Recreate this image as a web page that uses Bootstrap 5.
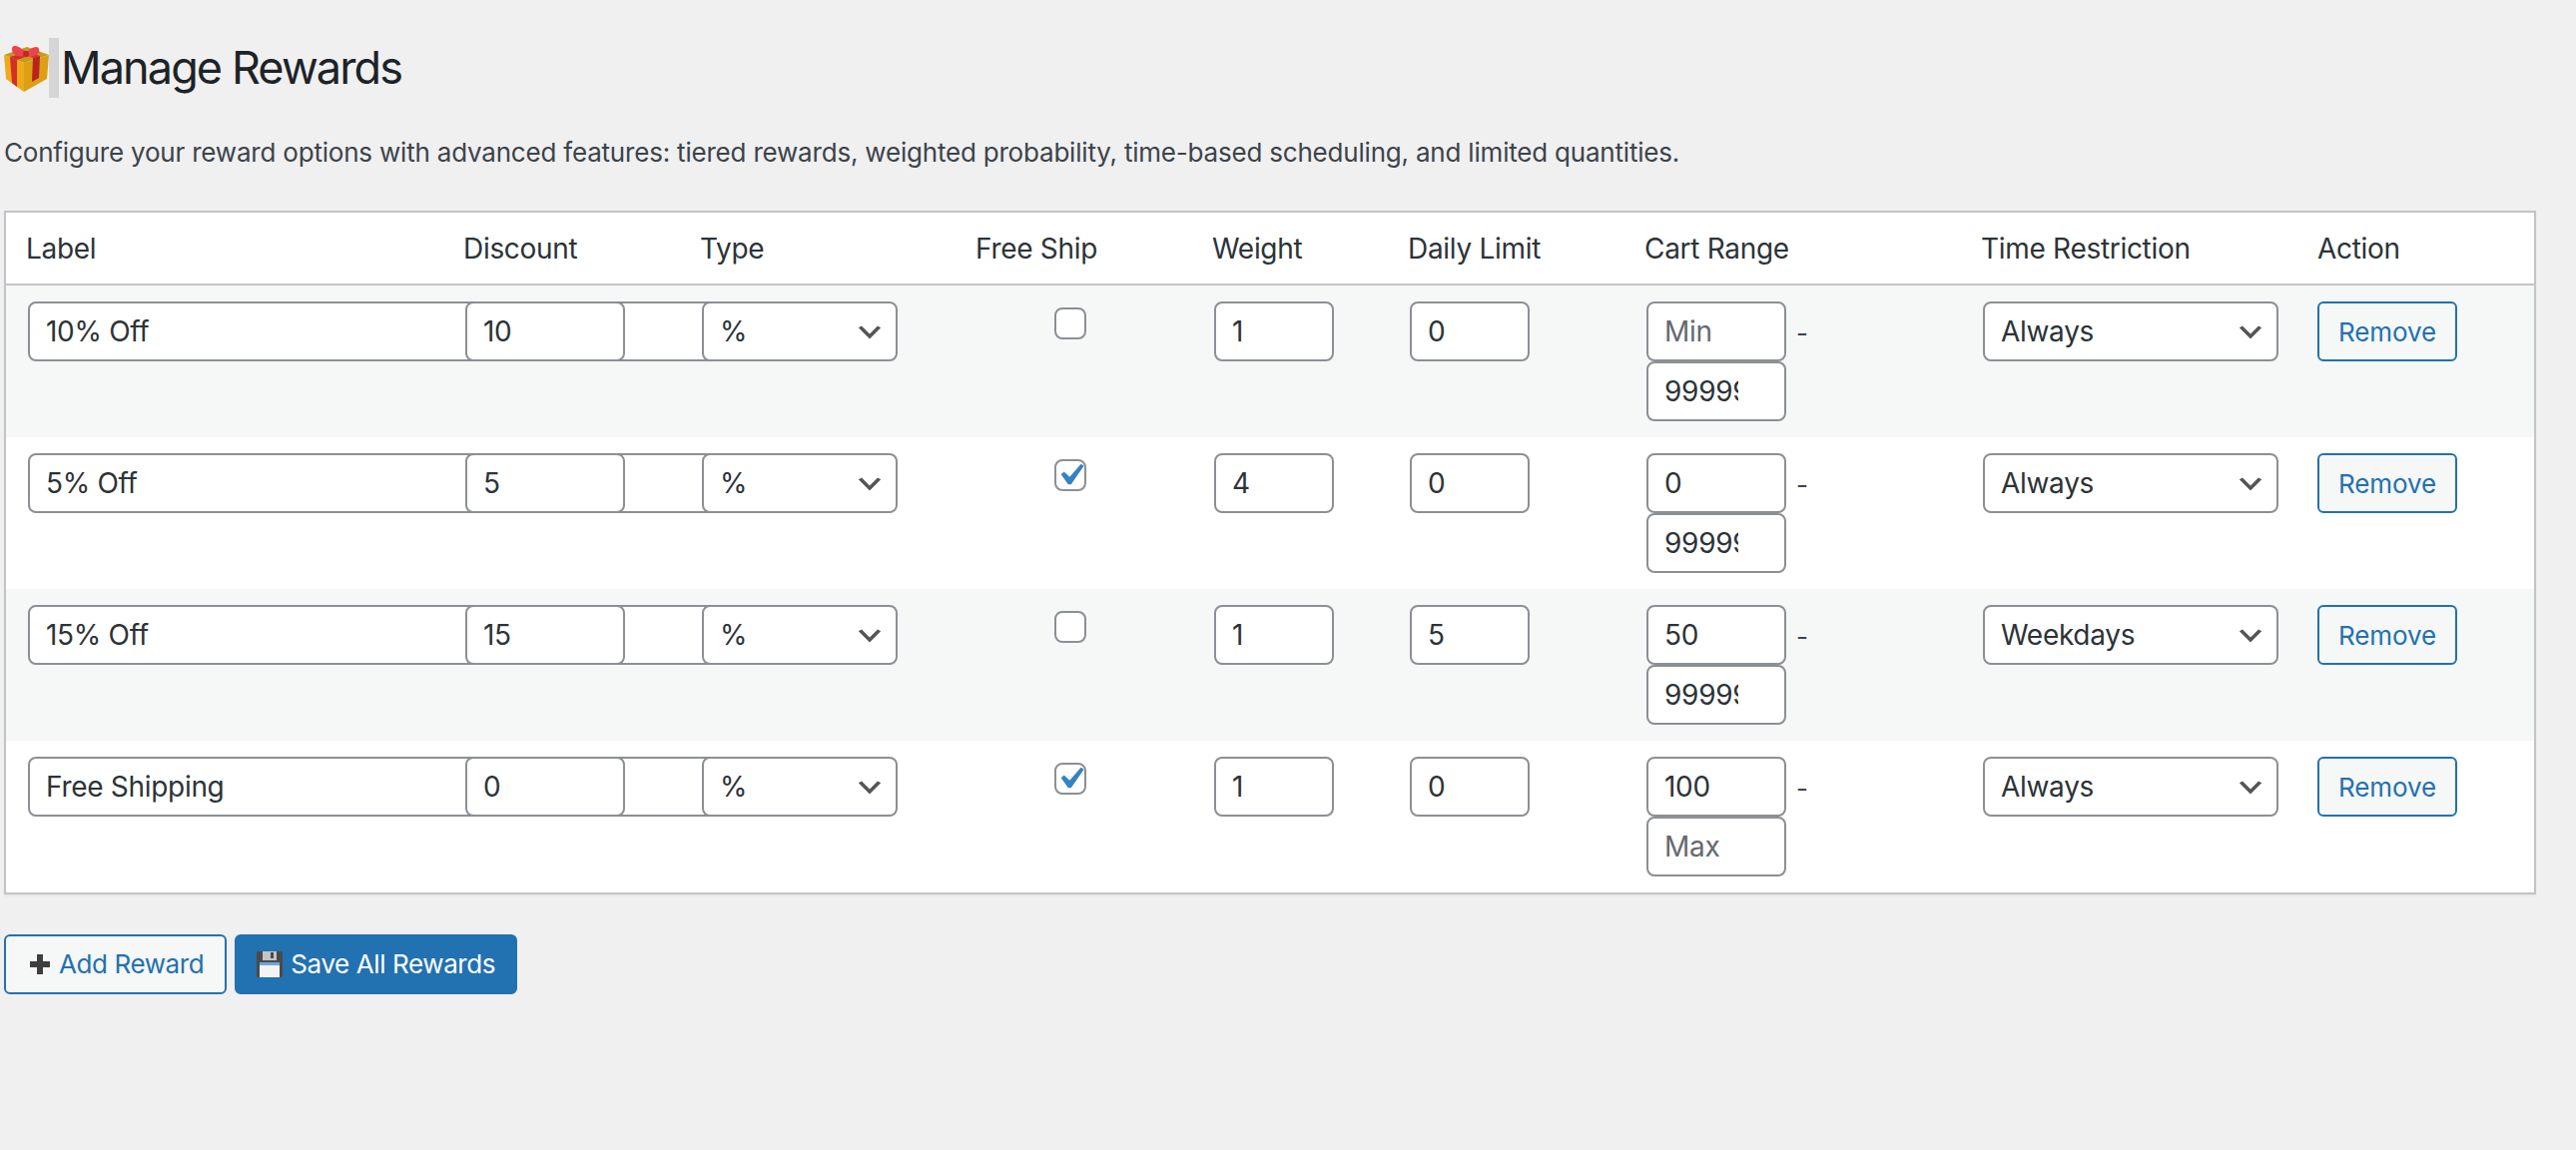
<!DOCTYPE html>
<html lang="en">
<head>
  <meta charset="UTF-8">
  <meta name="viewport" content="width=device-width, initial-scale=1.0">
  <title>Manage Rewards</title>
  <link href="https://cdn.jsdelivr.net/npm/bootstrap@5.3.0/dist/css/bootstrap.min.css" rel="stylesheet">
  <style>
    body {
      background: #f0f0f1;
      font-family: Inter, "Liberation Sans", sans-serif;
      font-size: 26px;
      color: #3c434a;
    }
    .page-wrap { padding: 38px 40px 0 4px; }
    .page-title {
      font-size: 45px;
      font-weight: 400;
      line-height: 60px;
      color: #1d2327;
      margin: 0 0 37px;
      letter-spacing: -1.9px;
    }
    .title-gift { width: 45px; height: 47px; margin-right: 0; }
    .emoji-gap { width: 10px; height: 60px; background: #d5d5d5; margin-right: 2px; }
    .page-desc { line-height: 36px; margin: 0 0 40px; letter-spacing: -0.2px; }

    .table.reward-table {
      --bs-table-bg: #fff;
      --bs-table-striped-bg: #f6f7f7;
      --bs-table-color: #2c3338;
      --bs-table-striped-color: #2c3338;
      table-layout: fixed;
      border-collapse: separate;
      border-spacing: 0;
      border: 2px solid #c3c4c7;
      box-shadow: 0 2px 2px rgba(0, 0, 0, .04);
      margin-bottom: 40px;
    }
    .reward-table > thead > tr > th {
      font-size: 28px;
      font-weight: 400;
      line-height: 39px;
      padding: 17px 20px 15px;
      color: #2c3338;
      border-bottom: 2px solid #c3c4c7;
      letter-spacing: -0.3px;
    }
    .reward-table > tbody > tr > td {
      padding: 16px 20px;
      border-bottom: 0;
      line-height: 36px;
    }
    .col-label { width: 438px; }
    .col-discount, .col-ship, .col-limit { width: 237px; }
    .col-type { width: 276px; }
    .col-weight { width: 196px; }
    .col-range, .col-time { width: 337px; }

    .reward-table .form-control,
    .reward-table .form-select {
      display: inline-block;
      vertical-align: top;
      height: 60px;
      min-height: 60px;
      margin: 0 2px;
      font-size: 28px;
      line-height: 40px;
      color: #2c3338;
      background-color: #fff;
      border: 2px solid #8c8f94;
      border-radius: 8px;
      letter-spacing: -0.3px;
    }
    .reward-table .form-control { padding: 0 16px; }
    .reward-table .form-control::placeholder { color: #646970; opacity: 1; }
    .reward-table .form-select {
      padding: 0 48px 0 16px;
      background-image: url("data:image/svg+xml,%3Csvg xmlns='http://www.w3.org/2000/svg' viewBox='0 0 20 20'%3E%3Cpath d='M5 6l5 5 5-5 2 1-7 7-7-7 2-1z' fill='%23555'/%3E%3C/svg%3E");
      background-position: right 10px top 55%;
      background-size: 32px 32px;
    }
    .field-label { width: 720px; }
    .field-discount { width: 160px; }
    .field-type { width: 196px; }
    .field-small { width: 120px; }
    .field-time { width: 296px; }
    .reward-table .field-range { width: 140px; padding-right: 46px; }
    .range-dash { margin: 4px 0 0 8px; width: 24px; color: #3c434a; }

    .reward-table .ship-check {
      width: 32px;
      height: 32px;
      margin: 6px 8px 0 0;
      float: none;
      background-color: #fff;
      border: 2px solid #8c8f94;
      border-radius: 8px;
    }
    .reward-table .ship-check:checked {
      background-image: url("data:image/svg+xml,%3Csvg xmlns='http://www.w3.org/2000/svg' viewBox='0 0 20 20'%3E%3Cpath d='M14.83 4.89l1.34.94-5.81 8.38H9.02L5.78 9.67l1.34-1.25 2.57 2.4z' fill='%233582c4'/%3E%3C/svg%3E");
      background-size: 44px 44px;
      background-position: center;
    }

    .btn.wp-button {
      height: 60px;
      font-size: 26px;
      line-height: 1;
      border: 2px solid #2271b1;
      border-radius: 6px;
      letter-spacing: -0.4px;
    }
    .btn.wp-secondary { color: #2271b1; background: #f6f7f7; padding: 0 21px 0 24px; gap: 9px; }
    .btn.wp-primary { color: #fff; background: #2271b1; padding: 0 20px; gap: 8px; }
    .btn.remove-btn { width: 140px; padding: 2px 0 0; letter-spacing: -0.1px; }
  </style>
</head>
<body>

<div class="page-wrap">
  <h1 class="page-title d-flex align-items-center">
    <svg class="title-gift" viewBox="0 0 45 47">
      <path d="M0 10 23 2 45 10 20 18z" fill="#c79a1c"/>
      <path d="M0 10 20 18V47L2 34z" fill="#eeaa1c"/>
      <path d="M20 18 45 10 43 34 20 47z" fill="#dca014"/>
      <path d="M6 12 13 15V42L8 38z" fill="#d32f27"/>
      <path d="M29 13 36 11 35 33 28 37z" fill="#b9241f"/>
      <path d="M6 12 13 15 36 7 30 5zM29 13 36 11 16 4 10 6z" fill="#cf2f28"/>
      <path d="M22 8C16 1 9-1 8 3 7 9 14 13 22 11 30 14 36 9 35 4 34 0 27 2 22 8z" fill="#ec444a"/>
      <circle cx="22" cy="9" r="3" fill="#c2262b"/>
    </svg><span class="emoji-gap"></span>Manage Rewards
  </h1>
  <p class="page-desc">Configure your reward options with advanced features: tiered rewards, weighted probability, time-based scheduling, and limited quantities.</p>

  <table class="table table-striped align-top reward-table">
    <colgroup>
      <col class="col-label"><col class="col-discount"><col class="col-type"><col class="col-ship"><col class="col-weight"><col class="col-limit"><col class="col-range"><col class="col-time"><col>
    </colgroup>
    <thead>
      <tr>
        <th>Label</th><th>Discount</th><th>Type</th><th>Free Ship</th><th>Weight</th><th>Daily Limit</th><th>Cart Range</th><th>Time Restriction</th><th>Action</th>
      </tr>
    </thead>
    <tbody>
      <tr>
        <td><input type="text" class="form-control field-label" value="10% Off"></td>
        <td><input type="text" class="form-control field-discount" value="10"></td>
        <td><select class="form-select field-type"><option>%</option></select></td>
        <td class="text-center"><input type="checkbox" class="form-check-input ship-check"></td>
        <td><input type="text" class="form-control field-small" value="1"></td>
        <td><input type="text" class="form-control field-small" value="0"></td>
        <td>
          <div class="d-flex flex-wrap align-items-center">
            <input type="text" class="form-control field-range" placeholder="Min"><span class="range-dash">-</span>
            <input type="text" class="form-control field-range" value="999999">
          </div>
        </td>
        <td><select class="form-select field-time"><option>Always</option></select></td>
        <td><button type="button" class="btn wp-button wp-secondary remove-btn">Remove</button></td>
      </tr>
      <tr>
        <td><input type="text" class="form-control field-label" value="5% Off"></td>
        <td><input type="text" class="form-control field-discount" value="5"></td>
        <td><select class="form-select field-type"><option>%</option></select></td>
        <td class="text-center"><input type="checkbox" class="form-check-input ship-check" checked></td>
        <td><input type="text" class="form-control field-small" value="4"></td>
        <td><input type="text" class="form-control field-small" value="0"></td>
        <td>
          <div class="d-flex flex-wrap align-items-center">
            <input type="text" class="form-control field-range" value="0"><span class="range-dash">-</span>
            <input type="text" class="form-control field-range" value="999999">
          </div>
        </td>
        <td><select class="form-select field-time"><option>Always</option></select></td>
        <td><button type="button" class="btn wp-button wp-secondary remove-btn">Remove</button></td>
      </tr>
      <tr>
        <td><input type="text" class="form-control field-label" value="15% Off"></td>
        <td><input type="text" class="form-control field-discount" value="15"></td>
        <td><select class="form-select field-type"><option>%</option></select></td>
        <td class="text-center"><input type="checkbox" class="form-check-input ship-check"></td>
        <td><input type="text" class="form-control field-small" value="1"></td>
        <td><input type="text" class="form-control field-small" value="5"></td>
        <td>
          <div class="d-flex flex-wrap align-items-center">
            <input type="text" class="form-control field-range" value="50"><span class="range-dash">-</span>
            <input type="text" class="form-control field-range" value="999999">
          </div>
        </td>
        <td><select class="form-select field-time"><option>Weekdays</option></select></td>
        <td><button type="button" class="btn wp-button wp-secondary remove-btn">Remove</button></td>
      </tr>
      <tr>
        <td><input type="text" class="form-control field-label" value="Free Shipping"></td>
        <td><input type="text" class="form-control field-discount" value="0"></td>
        <td><select class="form-select field-type"><option>%</option></select></td>
        <td class="text-center"><input type="checkbox" class="form-check-input ship-check" checked></td>
        <td><input type="text" class="form-control field-small" value="1"></td>
        <td><input type="text" class="form-control field-small" value="0"></td>
        <td>
          <div class="d-flex flex-wrap align-items-center">
            <input type="text" class="form-control field-range" value="100"><span class="range-dash">-</span>
            <input type="text" class="form-control field-range" placeholder="Max">
          </div>
        </td>
        <td><select class="form-select field-time"><option>Always</option></select></td>
        <td><button type="button" class="btn wp-button wp-secondary remove-btn">Remove</button></td>
      </tr>
    </tbody>
  </table>

  <div class="d-flex gap-2">
    <button type="button" class="btn wp-button wp-secondary d-inline-flex align-items-center">
      <svg width="20" height="20" viewBox="0 0 20 20"><path d="M7 0h6v7h7v6h-7v7H7v-7H0V7h7z" fill="#3f3f3f"/></svg>Add Reward
    </button>
    <button type="button" class="btn wp-button wp-primary d-inline-flex align-items-center">
      <svg width="26" height="26" viewBox="0 0 26 26">
        <path d="M1 0h24l1 1v24l-1 1H1l-1-1V1z" fill="#4a4a4a"/>
        <rect x="6" y="0" width="14" height="9" fill="#c4c4c4"/>
        <rect x="14" y="1" width="3" height="6" fill="#4a4a4a"/>
        <rect x="3" y="11" width="20" height="3" fill="#6ea4e0"/>
        <rect x="3" y="14" width="20" height="12" fill="#f2f3f5"/>
      </svg>Save All Rewards
    </button>
  </div>
</div>

<script src="https://cdn.jsdelivr.net/npm/bootstrap@5.3.0/dist/js/bootstrap.bundle.min.js"></script>
</body>
</html>
